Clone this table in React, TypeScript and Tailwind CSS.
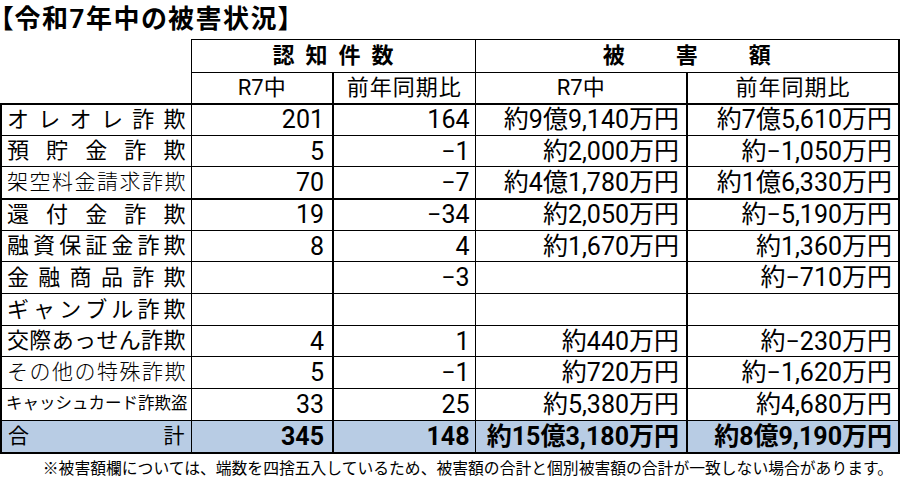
import React from 'react';

type Row = {
  label: string;
  lc: string;
  a: string;
  b: string;
  c: string;
  d: string;
  h: string;
  bottom: string;
  total?: boolean;
};

const rows: Row[] = [
  { label: 'オレオレ詐欺', lc: 'text-[22px] px-[5px]', a: '201', b: '164', c: '約9億9,140万円', d: '約7億5,610万円', h: 'h-[32px]', bottom: 'border-b' },
  { label: '預貯金詐欺', lc: 'text-[22px] px-[5px]', a: '5', b: '−1', c: '約2,000万円', d: '約−1,050万円', h: 'h-[31px]', bottom: 'border-b' },
  { label: '架空料金請求詐欺', lc: 'text-[21px] font-light px-[5px]', a: '70', b: '−7', c: '約4億1,780万円', d: '約1億6,330万円', h: 'h-[32px]', bottom: 'border-b-2' },
  { label: '還付金詐欺', lc: 'text-[22px] px-[5px]', a: '19', b: '−34', c: '約2,050万円', d: '約−5,190万円', h: 'h-[32px]', bottom: 'border-b' },
  { label: '融資保証金詐欺', lc: 'text-[22px] px-[5px]', a: '8', b: '4', c: '約1,670万円', d: '約1,360万円', h: 'h-[31px]', bottom: 'border-b' },
  { label: '金融商品詐欺', lc: 'text-[22px] px-[5px]', a: '', b: '−3', c: '', d: '約−710万円', h: 'h-[32px]', bottom: 'border-b' },
  { label: 'ギャンブル詐欺', lc: 'text-[22px] px-[5px]', a: '', b: '', c: '', d: '', h: 'h-[32px]', bottom: 'border-b' },
  { label: '交際あっせん詐欺', lc: 'text-[22px] px-[5px]', a: '4', b: '1', c: '約440万円', d: '約−230万円', h: 'h-[31px]', bottom: 'border-b' },
  { label: 'その他の特殊詐欺', lc: 'text-[21px] font-light px-[5px]', a: '5', b: '−1', c: '約720万円', d: '約−1,620万円', h: 'h-[32px]', bottom: 'border-b' },
  { label: 'キャッシュカード詐欺盗', lc: 'text-[16.5px] px-[4px]', a: '33', b: '25', c: '約5,380万円', d: '約4,680万円', h: 'h-[32px]', bottom: 'border-b' },
  { label: '合計', lc: 'text-[21px] px-[6px]', a: '345', b: '148', c: '約15億3,180万円', d: '約8億9,190万円', h: 'h-[32px]', bottom: 'border-b-2', total: true },
];

function Distributed({ text, cls }: { text: string; cls: string }) {
  return (
    <div className={`flex justify-between leading-none ${cls}`}>
      {Array.from(text).map((ch, i) => (
        <span key={i}>{ch}</span>
      ))}
    </div>
  );
}

export default function App() {
  const font = { fontFamily: 'Roboto, "Noto Sans CJK JP", "Noto Sans", sans-serif' };
  return (
    <div className="w-[902px] h-[486px] bg-white text-black overflow-hidden" style={font}>
      <div className="h-[39px] pt-[5px] text-[26px] font-bold leading-[28px] tracking-[1.5px] [font-feature-settings:'palt']">
        【令和7年中の被害状況】
      </div>
      <table className="border-collapse table-fixed w-[898px]">
        <colgroup>
          <col className="w-[190px]" />
          <col className="w-[142px]" />
          <col className="w-[142px]" />
          <col className="w-[212px]" />
          <col className="w-[212px]" />
        </colgroup>
        <tbody>
          <tr>
            <td rowSpan={2} className="p-0 border-black border-r border-b-2"></td>
            <td colSpan={2} className="p-0 h-[33px] border-black border-t border-r border-b align-middle">
              <div className="flex justify-center gap-[11px] text-[22px] font-bold leading-none">
                <span>認</span>
                <span>知</span>
                <span>件</span>
                <span>数</span>
              </div>
            </td>
            <td colSpan={2} className="p-0 h-[33px] border-black border-t border-r-2 border-b align-middle">
              <div className="flex justify-center gap-[51px] text-[22px] font-bold leading-none">
                <span>被</span>
                <span>害</span>
                <span>額</span>
              </div>
            </td>
          </tr>
          <tr>
            <td className="p-0 h-[31px] border-black border-r-2 border-b-2 text-center text-[22px] leading-none">R7中</td>
            <td className="p-0 h-[31px] border-black border-r border-b-2 text-center text-[22px] leading-none tracking-[1px]">前年同期比</td>
            <td className="p-0 h-[31px] border-black border-r-2 border-b-2 text-center text-[22px] leading-none">R7中</td>
            <td className="p-0 h-[31px] border-black border-r-2 border-b-2 text-center text-[22px] leading-none tracking-[1px]">前年同期比</td>
          </tr>
          {rows.map((r, i) => {
            const bg = r.total ? 'bg-[#b8cce4]' : '';
            const num = `p-0 ${r.h} ${r.bottom} border-black text-right align-middle leading-none ${bg} ${r.total ? 'font-bold' : ''}`;
            return (
              <tr key={i}>
                <td className={`p-0 ${r.h} ${r.bottom} border-black border-l-2 border-r align-middle ${bg}`}>
                  <Distributed text={r.label} cls={r.lc} />
                </td>
                <td className={`${num} border-r-2 pr-[8px] text-[25px]`}>{r.a}</td>
                <td className={`${num} border-r pr-[5px] text-[25px]`}>{r.b}</td>
                <td className={`${num} border-r-2 pr-[7px] text-[25px]`}>{r.c}</td>
                <td className={`${num} border-r-2 pr-[6px] text-[25px]`}>{r.d}</td>
              </tr>
            );
          })}
        </tbody>
      </table>
      <div className="w-[898px] pt-[5px] pr-[5px] text-right text-[15.8px] leading-[20px]">
        ※被害額欄については、端数を四捨五入しているため、被害額の合計と個別被害額の合計が一致しない場合があります。
      </div>
    </div>
  );
}
